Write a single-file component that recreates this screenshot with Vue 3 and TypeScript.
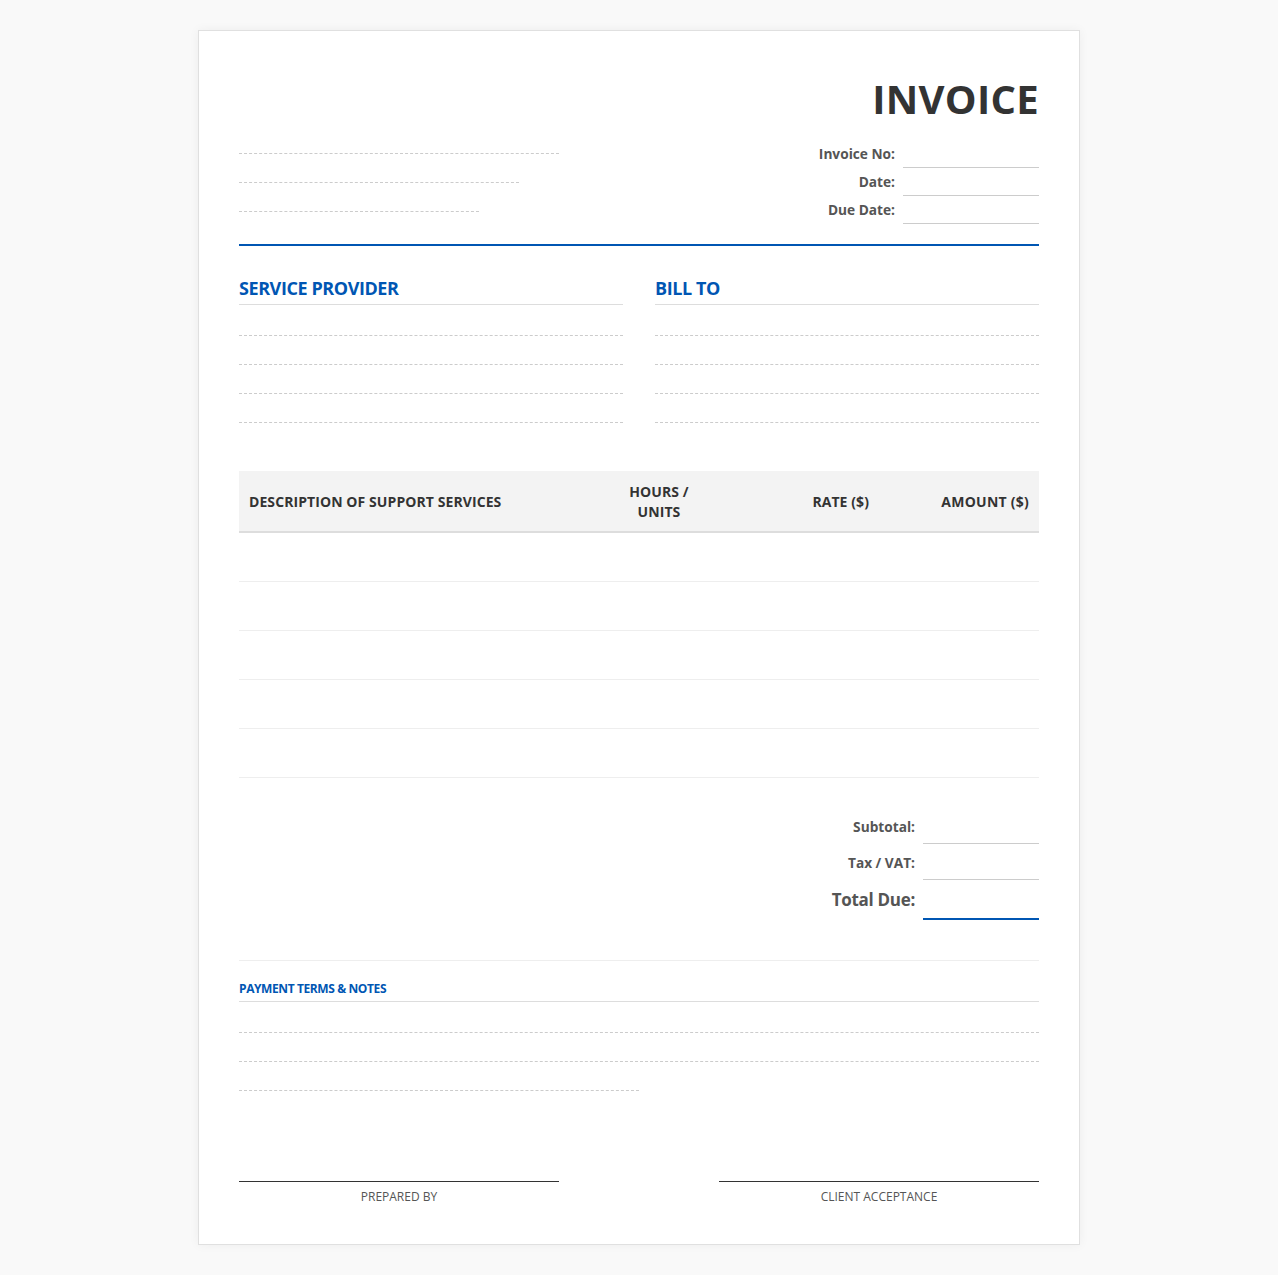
<script setup lang="ts">
interface MetaField {
  label: string
}

const senderLines: number[] = [320, 280, 240]
const metaFields: MetaField[] = [{ label: 'Invoice No:' }, { label: 'Date:' }, { label: 'Due Date:' }]
const parties: string[] = ['SERVICE PROVIDER', 'BILL TO']
const emptyRows: number[] = [1, 2, 3, 4, 5]
const signatures: string[] = ['PREPARED BY', 'CLIENT ACCEPTANCE']
</script>

<template>
  <div class="page">
    <div class="sheet">
      <header class="head">
        <h1 class="doc-title">INVOICE</h1>
        <div class="head-row">
          <div class="sender">
            <div v-for="w in senderLines" :key="w" class="dash-line" :style="{ width: w + 'px' }"></div>
          </div>
          <div class="meta">
            <div v-for="f in metaFields" :key="f.label" class="meta-row">
              <span class="meta-label">{{ f.label }}</span>
              <span class="meta-value"></span>
            </div>
          </div>
        </div>
      </header>

      <section class="parties">
        <div v-for="p in parties" :key="p" class="party">
          <h2 class="party-title">{{ p }}</h2>
          <div v-for="n in 4" :key="n" class="dash-line"></div>
        </div>
      </section>

      <table class="items">
        <thead>
          <tr>
            <th class="col-desc">DESCRIPTION OF SUPPORT SERVICES</th>
            <th class="col-hours">HOURS / UNITS</th>
            <th class="col-rate">RATE ($)</th>
            <th class="col-amount">AMOUNT ($)</th>
          </tr>
        </thead>
        <tbody>
          <tr v-for="r in emptyRows" :key="r">
            <td></td>
            <td></td>
            <td></td>
            <td></td>
          </tr>
        </tbody>
      </table>

      <section class="totals">
        <div class="total-row">
          <span class="total-label">Subtotal:</span>
          <span class="total-value"></span>
        </div>
        <div class="total-row">
          <span class="total-label">Tax / VAT:</span>
          <span class="total-value"></span>
        </div>
        <div class="total-row grand">
          <span class="total-label">Total Due:</span>
          <span class="total-value"></span>
        </div>
      </section>

      <section class="notes">
        <h3 class="notes-title">PAYMENT TERMS &amp; NOTES</h3>
        <div class="dash-line"></div>
        <div class="dash-line"></div>
        <div class="dash-line short"></div>
      </section>

      <footer class="signs">
        <div v-for="s in signatures" :key="s" class="sign">{{ s }}</div>
      </footer>
    </div>
  </div>
</template>

<style>
html,
body {
  margin: 0;
  background: #f9f9f9;
}
</style>

<style scoped>
.page {
  padding: 30px 0;
  font-family: "Open Sans", "Noto Sans", sans-serif;
  color: #333;
}

.sheet {
  box-sizing: border-box;
  width: 882px;
  height: 1215px;
  margin: 0 auto;
  padding: 40px;
  background: #fff;
  border: 1px solid #e0e0e0;
  box-shadow: 0 0 10px rgba(0, 0, 0, 0.05);
}

/* header */
.head {
  border-bottom: 2px solid #0056b3;
  padding-bottom: 20px;
}

.doc-title {
  margin: 0;
  font-size: 40px;
  line-height: 56px;
  font-weight: 700;
  text-align: right;
  letter-spacing: 0.3px;
}

.head-row {
  display: flex;
  justify-content: space-between;
}

.sender {
  padding-top: 26px;
}

.dash-line {
  height: 28px;
  border-bottom: 1px dashed #ccc;
}

.sender .dash-line:first-child {
  height: 0;
}

.meta {
  margin-top: 13px;
}

.meta-row {
  display: flex;
  justify-content: flex-end;
  align-items: flex-end;
  gap: 8px;
  height: 28px;
}

.meta-label {
  font-size: 13.7px;
  font-weight: 700;
  line-height: 20px;
  color: #555;
  margin-bottom: 4px;
}

.meta-value {
  width: 136px;
  border-bottom: 1px solid #ccc;
}

/* parties */
.parties {
  display: grid;
  grid-template-columns: 1fr 1fr;
  gap: 32px;
  margin-top: 28px;
}

.party-title {
  margin: 0 0 2px;
  font-size: 18px;
  line-height: 28px;
  font-weight: 700;
  color: #0056b3;
  border-bottom: 1px solid #ddd;
  padding-bottom: 2px;
  letter-spacing: -0.42px;
}

/* table */
.items {
  width: 800px;
  margin-top: 48px;
  border-collapse: collapse;
  table-layout: fixed;
}

.items th {
  box-sizing: border-box;
  padding: 11px 10px 9px;
  background: #f3f3f3;
  border-bottom: 2px solid #ddd;
  font-size: 14px;
  line-height: 20px;
  font-weight: 700;
  text-align: right;
  letter-spacing: 0.08px;
}

.items td {
  height: 48px;
  padding: 0;
  border-bottom: 1px solid #eee;
}

.items .col-desc {
  width: 45%;
  text-align: left;
}

.items .col-hours {
  width: 15%;
  text-align: center;
}

.items .col-rate,
.items .col-amount {
  width: 20%;
}

.items .col-amount {
  letter-spacing: 0.25px;
}

/* totals */
.totals {
  margin-top: 29px;
  padding-bottom: 40px;
  border-bottom: 1px solid #eee;
}

.total-row {
  display: flex;
  justify-content: flex-end;
  align-items: flex-end;
  gap: 8px;
  height: 36px;
}

.total-row:first-child {
  height: 37px;
}

.total-label {
  font-size: 13.7px;
  font-weight: 700;
  line-height: 20px;
  color: #555;
  margin-bottom: 7px;
}

.total-value {
  width: 116px;
  border-bottom: 1px solid #ccc;
}

.grand {
  height: 40px;
}

.grand .total-label {
  font-size: 17px;
  font-weight: 700;
  line-height: 24px;
  margin-bottom: 8px;
  letter-spacing: -0.3px;
}

.grand .total-value {
  border-bottom: 2px solid #0056b3;
}

/* notes */
.notes {
  margin-top: 15px;
}

.notes-title {
  margin: 0 0 2px;
  font-size: 12px;
  line-height: 25px;
  font-weight: 700;
  color: #0056b3;
  border-bottom: 1px solid #ddd;
  letter-spacing: -0.4px;
}

.short {
  width: 400px;
}

/* signatures */
.signs {
  display: flex;
  justify-content: space-between;
  margin-top: 90px;
}

.sign {
  width: 320px;
  padding-top: 6px;
  border-top: 1px solid #333;
  font-size: 12px;
  line-height: 17px;
  text-align: center;
  color: #555;
}
</style>
